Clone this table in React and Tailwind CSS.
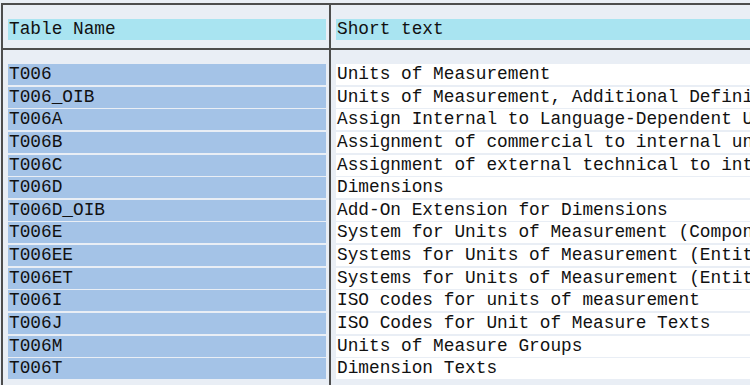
const rows = [
  ["T006", "Units of Measurement"],
  ["T006_OIB", "Units of Measurement, Additional Definitions"],
  ["T006A", "Assign Internal to Language-Dependent Unit"],
  ["T006B", "Assignment of commercial to internal unit"],
  ["T006C", "Assignment of external technical to internal unit"],
  ["T006D", "Dimensions"],
  ["T006D_OIB", "Add-On Extension for Dimensions"],
  ["T006E", "System for Units of Measurement (Components)"],
  ["T006EE", "Systems for Units of Measurement (Entities)"],
  ["T006ET", "Systems for Units of Measurement (Entity Texts)"],
  ["T006I", "ISO codes for units of measurement"],
  ["T006J", "ISO Codes for Unit of Measure Texts"],
  ["T006M", "Units of Measure Groups"],
  ["T006T", "Dimension Texts"],
];

function App() {
  return (
    <div
      className="h-[385px] w-[750px] overflow-hidden bg-[#e9eef5] pl-px pt-[3px] text-[17.8px] leading-[21px] text-[#111]"
      style={{ fontFamily: '"Liberation Mono", "Courier New", monospace' }}
    >
      <div className="h-full w-[760px] border-l-2 border-t-2 border-[#4d4d4d]">
        {/* header */}
        <div className="flex h-[43px]">
          <div className="w-[328px] shrink-0 border-r-2 border-[#4d4d4d] pl-[5px] pr-[3px] pt-[14px]">
            <div className="h-[21px] whitespace-nowrap bg-[#a9e4f1] pl-px">Table Name</div>
          </div>
          <div className="flex-1 pl-[5px] pt-[14px]">
            <div className="h-[21px] whitespace-nowrap bg-[#a9e4f1] pl-px">Short text</div>
          </div>
        </div>

        <div className="h-[2px] bg-[#4d4d4d]" />

        {/* body */}
        <div className="flex h-full">
          <div className="w-[328px] shrink-0 border-r-2 border-[#4d4d4d] pl-[5px] pr-[3px] pt-[14px]">
            <div className="flex flex-col gap-[1.64px]">
              {rows.map(([name]) => (
                <div key={name} className="h-[21px] whitespace-nowrap bg-[#a4c3e7] pl-px">
                  {name}
                </div>
              ))}
            </div>
          </div>
          <div className="flex-1 overflow-hidden pl-[5px] pt-[14px]">
            <div className="flex flex-col gap-[1.64px]">
              {rows.map(([name, text]) => (
                <div key={name} className="h-[21px] overflow-hidden whitespace-nowrap bg-white pl-px">
                  {text}
                </div>
              ))}
            </div>
          </div>
        </div>
      </div>
    </div>
  );
}

export default App;
